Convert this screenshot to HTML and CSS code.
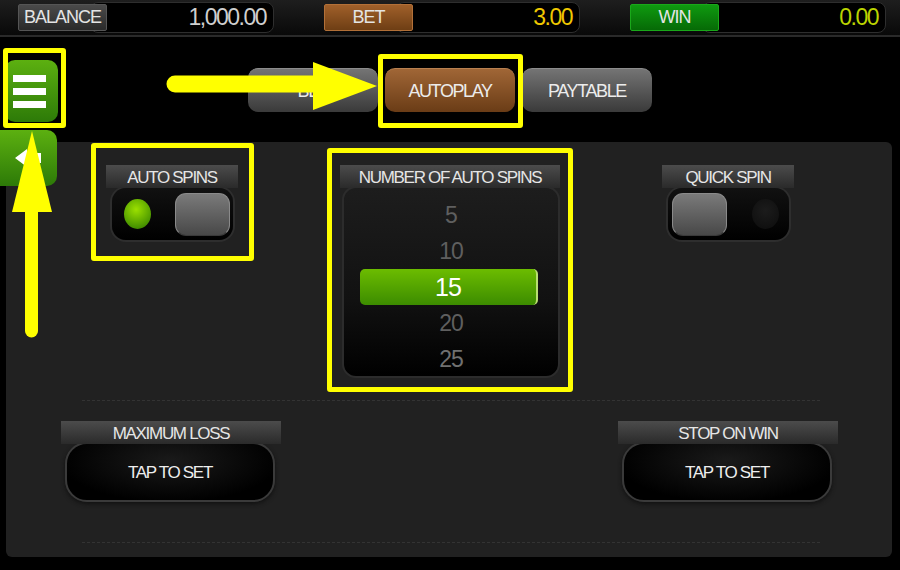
FILE: index.html
```html
<!DOCTYPE html>
<html>
<head>
  <meta charset="UTF-8">
  <meta name="viewport" content="width=device-width, initial-scale=1.0">
  <title>Autoplay settings</title>
  <link rel="stylesheet" href="styles.css">
</head>
<body>
  <div class="screen">
    <header class="topbar">
      <div class="meter">
        <span class="meter-label">BALANCE</span>
        <span class="meter-value">1,000.00</span>
      </div>
      <div class="meter meter-bet">
        <span class="meter-label">BET</span>
        <span class="meter-value">3.00</span>
      </div>
      <div class="meter meter-win">
        <span class="meter-label">WIN</span>
        <span class="meter-value">0.00</span>
      </div>
    </header>

    <div class="side">
      <div class="menu-btn marked">
        <span></span><span></span><span></span>
      </div>
      <div class="back-tab">
        <svg width="30" height="20" viewBox="0 0 30 20">
          <path d="M1 10 L13 1 L13 5 L27 5 L27 15 L13 15 L13 19 Z" fill="#fff"/>
        </svg>
      </div>
    </div>

    <nav class="tabs">
      <div class="tab">BET</div>
      <div class="tab tab-active marked">AUTOPLAY</div>
      <div class="tab">PAYTABLE</div>
    </nav>

    <main class="panel">
      <section class="controls">
        <div class="control auto-spins marked">
          <div class="control-title">AUTO SPINS</div>
          <div class="toggle toggle-on">
            <span class="lamp lamp-on"></span>
            <span class="knob"></span>
          </div>
        </div>

        <div class="control spins-count marked">
          <div class="control-title">NUMBER OF AUTO SPINS</div>
          <div class="wheel">
            <div class="wheel-item">5</div>
            <div class="wheel-item">10</div>
            <div class="wheel-item selected">15</div>
            <div class="wheel-item">20</div>
            <div class="wheel-item">25</div>
          </div>
        </div>

        <div class="control quick-spin">
          <div class="control-title">QUICK SPIN</div>
          <div class="toggle toggle-off">
            <span class="knob"></span>
            <span class="lamp"></span>
          </div>
        </div>
      </section>

      <div class="divider"></div>

      <section class="limits">
        <div class="limit">
          <div class="control-title">MAXIMUM LOSS</div>
          <div class="limit-field">TAP TO SET</div>
        </div>
        <div class="limit">
          <div class="control-title">STOP ON WIN</div>
          <div class="limit-field">TAP TO SET</div>
        </div>
      </section>

      <div class="divider"></div>
    </main>

    <!-- annotation arrows -->
    <svg class="pointers" width="900" height="570" viewBox="0 0 900 570">
      <line x1="175" y1="84" x2="318" y2="84" stroke="#ffff00" stroke-width="17" stroke-linecap="round"/>
      <polygon points="313,62 377,86 313,110" fill="#ffff00"/>
      <line x1="31.5" y1="331" x2="31.5" y2="205" stroke="#ffff00" stroke-width="13" stroke-linecap="round"/>
      <polygon points="32,131 12,212 52,212" fill="#ffff00"/>
    </svg>
  </div>
</body>
</html>
```

FILE: styles.css
```css
body {
  margin: 0;
  background: #000;
  font-family: 'Liberation Sans', Arial, sans-serif;
  color: #e8e8e8;
}
.screen {
  position: relative;
  width: 900px;
  height: 570px;
  overflow: hidden;
  background: #000;
}

/* top meters */
.topbar {
  display: flex;
  gap: 50px;
  height: 35px;
  padding: 0 0 0 18px;
  background: linear-gradient(#1e1e1e, #090909);
  border-bottom: 2px solid #2a2a2a;
}
.meter {
  display: flex;
  align-items: center;
}
.meter-label {
  position: relative;
  z-index: 1;
  width: 87px;
  height: 25px;
  line-height: 25px;
  text-align: center;
  font-size: 18px;
  letter-spacing: -1px;
  color: #e4e4e4;
  background: linear-gradient(#4a4a4a, #2a2a2a);
  border: 1px solid #555;
  border-radius: 2px;
}
.meter-value {
  width: 175px;
  height: 29px;
  margin-left: -17px;
  padding-right: 7px;
  line-height: 29px;
  text-align: right;
  font-size: 23px;
  letter-spacing: -1.5px;
  color: #cfcfcf;
  background: #000;
  border: 1px solid #2e2e2e;
  border-radius: 8px;
}
.meter-bet .meter-label {
  background: linear-gradient(#a0602a, #6e3e14);
  border-color: #b27038;
}
.meter-bet .meter-value {
  color: #f0c800;
}
.meter-win .meter-label {
  background: linear-gradient(#0f9a10, #066a06);
  border-color: #1aa81a;
}
.meter-win .meter-value {
  color: #bcd400;
}

/* yellow highlight boxes */
.marked {
  position: relative;
}
.marked::after {
  content: '';
  position: absolute;
  border: 5px solid #ffff00;
  border-radius: 3px;
  pointer-events: none;
}
.menu-btn::after {
  top: -12px;
  right: -8px;
  bottom: -6px;
  left: -2px;
}
.tab-active::after {
  top: -15px;
  right: -8px;
  bottom: -16px;
  left: -7px;
}
.auto-spins::after {
  top: -22px;
  right: -16px;
  bottom: -21px;
  left: -15px;
}
.spins-count::after {
  top: -17px;
  right: -13px;
  bottom: -14px;
  left: -13px;
}

/* left floating buttons */
.side {
  position: absolute;
  top: 60px;
  left: 0;
  z-index: 3;
  display: flex;
  flex-direction: column;
  gap: 8px;
}
.menu-btn {
  display: flex;
  flex-direction: column;
  justify-content: center;
  gap: 6px;
  width: 53px;
  height: 62px;
  margin-left: 5px;
  padding-left: 8px;
  box-sizing: border-box;
  background: linear-gradient(#5cb010, #2d7a08);
  border-radius: 10px;
}
.menu-btn span {
  display: block;
  width: 33px;
  height: 7px;
  background: #fff;
}
.back-tab {
  display: flex;
  align-items: center;
  width: 57px;
  height: 56px;
  padding-left: 14px;
  box-sizing: border-box;
  background: linear-gradient(#5cb010, #2d7a08);
  border-radius: 0 10px 10px 0;
}

/* tabs */
.tabs {
  display: flex;
  justify-content: center;
  gap: 7px;
  margin-top: 31px;
}
.tab {
  width: 130px;
  height: 44px;
  line-height: 45px;
  text-align: center;
  font-size: 18px;
  letter-spacing: -1.4px;
  color: #ececec;
  background: linear-gradient(#747474, #3a3a3a);
  border-top: 1px solid #8c8c8c;
  border-radius: 10px;
  box-sizing: border-box;
}
.tab-active {
  background: linear-gradient(#a06636, #6a3c16);
  border-top-color: #b88050;
}

/* main panel */
.panel {
  height: 415px;
  margin: 30px 8px 0 6px;
  padding-top: 23px;
  box-sizing: border-box;
  background: #212121;
  border-radius: 6px;
}
.controls {
  display: flex;
  justify-content: center;
  align-items: flex-start;
  gap: 102px;
  height: 213px;
  padding-left: 2px;
}
.control-title {
  position: relative;
  z-index: 1;
  height: 23px;
  line-height: 26px;
  text-align: center;
  font-size: 17px;
  letter-spacing: -1.3px;
  color: #e6e6e6;
  background: linear-gradient(#4c4c4c, #2a2a2a);
}
.auto-spins,
.quick-spin {
  width: 132px;
}
.spins-count {
  width: 220px;
}

/* toggles */
.toggle {
  display: flex;
  align-items: center;
  justify-content: space-between;
  height: 52px;
  margin: 0 5px 0 6px;
  background: linear-gradient(#111, #000);
  border-radius: 14px;
  box-shadow: 0 0 0 2px #2e2e2e;
}
.toggle-on {
  padding: 0 3px 0 12px;
}
.toggle-off {
  padding: 0 10px 0 4px;
}
.knob {
  width: 55px;
  height: 43px;
  box-sizing: border-box;
  background: linear-gradient(#7a7a7a, #484848);
  border: 1px solid #8a8a8a;
  border-bottom-color: #3a3a3a;
  border-radius: 11px;
}
.lamp {
  width: 27px;
  height: 30px;
  border-radius: 50%;
  background: radial-gradient(circle at 50% 40%, #1c1c1c, #0c0c0c);
}
.lamp-on {
  background: radial-gradient(circle at 45% 35%, #9be000, #4a9600 70%, #2e6a00);
}

/* spin count wheel */
.wheel {
  height: 192px;
  margin: -2px 0 0 2px;
  padding-top: 9px;
  box-sizing: border-box;
  background: linear-gradient(#1d1d1d, #111 60%, #000);
  border: 2px solid #2c2c2c;
  border-radius: 14px;
}
.wheel-item {
  height: 36px;
  line-height: 36px;
  text-align: center;
  font-size: 23px;
  letter-spacing: -1px;
  color: #5f5f5f;
}
.wheel-item:last-child {
  color: #707070;
}
.wheel-item.selected {
  margin: 0 20px 0 16px;
  font-size: 25px;
  color: #fff;
  background: linear-gradient(#6cbc00, #3c8c00);
  border-right: 2px solid #b8e070;
  border-radius: 5px;
}

/* bottom limits */
.divider {
  height: 0;
  margin: 22px 72px 0 76px;
  border-top: 1px dashed #333;
}
.limits {
  display: flex;
  justify-content: space-between;
  padding: 20px 54px 40px 55px;
}
.limit {
  width: 220px;
}
.limit-field {
  height: 60px;
  margin: -2px 6px 0 4px;
  line-height: 58px;
  text-align: center;
  font-size: 17px;
  letter-spacing: -1.3px;
  color: #eee;
  background: radial-gradient(ellipse at 50% 30%, #1a1a1a, #000 75%);
  border: 2px solid #3a3a3a;
  border-radius: 22px;
  box-sizing: border-box;
  box-shadow: 0 2px 4px #111;
}
.limits + .divider {
  margin-top: 0;
}

/* annotation arrows */
.pointers {
  position: absolute;
  top: 0;
  left: 0;
  z-index: 5;
  pointer-events: none;
}
```
